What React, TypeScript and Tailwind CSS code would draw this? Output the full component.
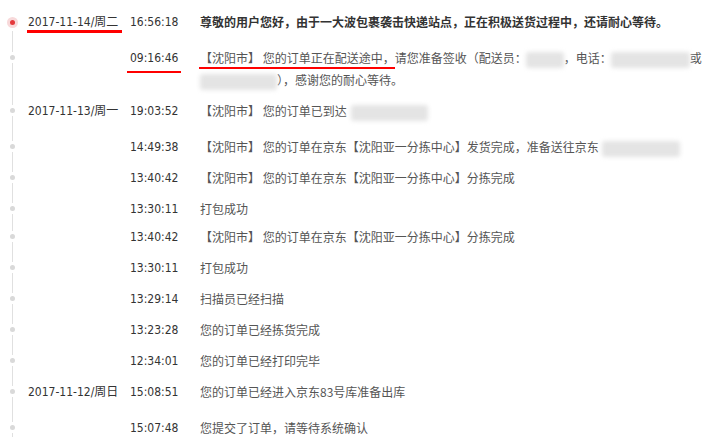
import React from "react";

const NUM_FONT = '"DejaVu Sans Condensed", "DejaVu Sans", "Noto Sans CJK SC", sans-serif';
const CJK_FONT = '"Noto Sans CJK SC", "Liberation Sans", sans-serif';

function Blur({ w, ml = 0 }: { w: number; ml?: number }) {
  return (
    <span
      className="inline-block h-[16px] align-middle bg-[#e4e4e4] blur-[2px] rounded-[3px]"
      style={{ width: w, marginLeft: ml }}
    />
  );
}

type Row = {
  date?: string;
  time: string;
  h: number;
  content: React.ReactNode;
  red?: boolean;
  mark?: boolean;
  bold?: boolean;
};

const rows: Row[] = [
  {
    date: "2017-11-14/周二",
    time: "16:56:18",
    h: 36,
    red: true,
    bold: true,
    content: "尊敬的用户您好，由于一大波包裹袭击快递站点，正在积极送货过程中，还请耐心等待。",
  },
  {
    time: "09:16:46",
    h: 53,
    mark: true,
    content: (
      <>
        <div className="whitespace-nowrap">
          【沈阳市】 您的订单正在配送途中，请您准备签收（配送员：
          <Blur w={38} ml={-1} />
          ，电话：
          <Blur w={79} ml={-1} />
          或
        </div>
        <div className="whitespace-nowrap">
          <Blur w={77} />
          ），感谢您的耐心等待。
        </div>
      </>
    ),
  },
  {
    date: "2017-11-13/周一",
    time: "19:03:52",
    h: 36,
    content: (
      <>
        【沈阳市】 您的订单已到达
        <Blur w={77} ml={4} />
      </>
    ),
  },
  {
    time: "14:49:38",
    h: 31,
    content: (
      <>
        【沈阳市】 您的订单在京东【沈阳亚一分拣中心】发货完成，准备送往京东
        <Blur w={78} ml={3} />
      </>
    ),
  },
  { time: "13:40:42", h: 31, content: "【沈阳市】 您的订单在京东【沈阳亚一分拣中心】分拣完成" },
  { time: "13:30:11", h: 28, content: "打包成功" },
  { time: "13:40:42", h: 31, content: "【沈阳市】 您的订单在京东【沈阳亚一分拣中心】分拣完成" },
  { time: "13:30:11", h: 31, content: "打包成功" },
  { time: "13:29:14", h: 31, content: "扫描员已经扫描" },
  { time: "13:23:28", h: 31, content: "您的订单已经拣货完成" },
  { time: "12:34:01", h: 31, content: "您的订单已经打印完毕" },
  { date: "2017-11-12/周日", time: "15:08:51", h: 36, content: "您的订单已经进入京东83号库准备出库" },
  { time: "15:07:48", h: 20, content: "您提交了订单，请等待系统确认" },
];

export default function App() {
  return (
    <div className="w-[707px] h-[446px] bg-white overflow-hidden pt-[11px]">
      {rows.map((r, i) => (
        <div key={i} className="flex" style={{ height: r.h }}>
          <div className="w-[25px] shrink-0 flex flex-col items-center">
            {r.red ? (
              <div className="mt-[6px] w-[11px] h-[11px] rounded-full bg-[#f8d9da] flex items-center justify-center">
                <div className="w-[5px] h-[5px] rounded-full bg-[#e4393c]" />
              </div>
            ) : (
              <>
                <div className="w-px h-[5px] bg-[#e0e0e0]" />
                <div className="mt-[3px] w-[5px] h-[5px] rounded-full bg-[#d9d9d9]" />
              </>
            )}
            <div className="mt-[3px] w-px flex-1 bg-[#e0e0e0]" />
          </div>
          <div
            className="relative ml-[3px] w-[102px] shrink-0 text-[12px] leading-[22px] text-[#333] whitespace-nowrap"
            style={{ fontFamily: NUM_FONT }}
          >
            {r.date ?? ""}
            {r.red && <div className="absolute left-[-1px] top-[19px] w-[95px] h-[3px] bg-[#ff0000]" />}
          </div>
          <div
            className="relative w-[70px] shrink-0 text-[12px] leading-[22px] text-[#333] whitespace-nowrap"
            style={{ fontFamily: NUM_FONT }}
          >
            {r.time}
            {r.mark && <div className="absolute left-[-3px] top-[24px] w-[54px] h-[2px] bg-[#ff0000]" />}
          </div>
          <div
            className={
              "relative flex-1 min-w-0 text-[12px] leading-[22px] whitespace-nowrap " +
              (r.bold ? "font-bold text-[#333]" : "text-[#555]")
            }
            style={{ fontFamily: CJK_FONT }}
          >
            {r.content}
            {r.mark && <div className="absolute left-[-1px] top-[20px] w-[196px] h-[2px] bg-[#ff0000]" />}
          </div>
        </div>
      ))}
    </div>
  );
}
